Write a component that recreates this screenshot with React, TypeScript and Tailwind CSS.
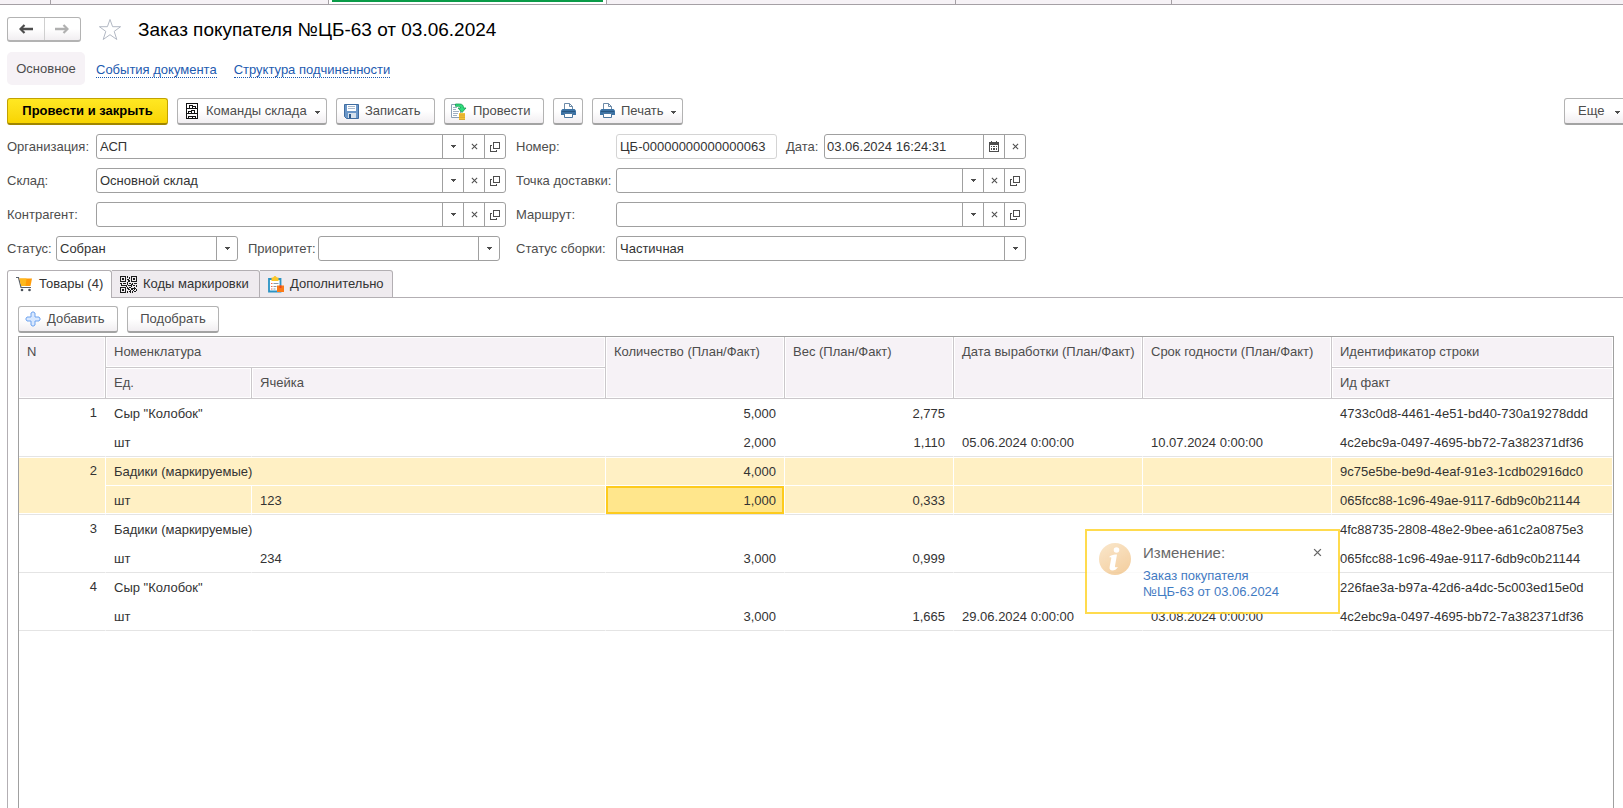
import React from 'react';

interface IconProps {
    className?: string;
}

const CaretIcon: React.FC<IconProps> = ({ className }) => (
    <svg viewBox="0 0 5 3" width="5" height="3" fill="currentColor" shapeRendering="crispEdges" className={className} aria-hidden="true">
        <path d="M0 0h5v1H4v1H3v1H2V2H1V1H0Z" />
    </svg>
);

const CrossIcon: React.FC<{ size: number }> = ({ size }) => (
    <svg viewBox="0 0 8 8" width={size} height={size} fill="none" stroke="currentColor" strokeWidth="1.2" aria-hidden="true">
        <path d="M1 1l6 6M7 1L1 7" />
    </svg>
);

const OpenIcon: React.FC = () => (
    <svg viewBox="0 0 10 10" width="10" height="10" fill="none" stroke="currentColor" shapeRendering="crispEdges" aria-hidden="true">
        <path d="M3.5.5h6v6h-6ZM2 3.500H.5v6h6V8" />
    </svg>
);

const CalendarIcon: React.FC = () => (
    <svg viewBox="0 0 10 11" width="10" height="11" fill="currentColor" shapeRendering="crispEdges" aria-hidden="true">
        <path d="M2 0h1v1h4V0h1v1h2v10H0V1h2ZM1 4v6h8V4Z" fillRule="evenodd" />
        <path d="M2 5h1v1H2ZM4 5h2v1H4ZM7 5h1v1H7ZM2 7h1v1H2ZM4 7h2v1H4ZM7 7h1v1H7ZM2 9h1V8H2ZM4 9h2V8H4ZM7 9h1V8H7Z" />
    </svg>
);

const ArrowIcon: React.FC<IconProps> = ({ className }) => (
    <svg viewBox="0 0 14 10" width="14" height="10" fill="none" stroke="currentColor" className={className} aria-hidden="true">
        <path d="M2 5h12" strokeWidth="2.500" />
        <path d="M5.500 1L1.500 5l4 4" strokeWidth="2.200" />
    </svg>
);

const StarIcon: React.FC = () => (
    <svg viewBox="0 0 24 23" width="24" height="23" fill="#fff" stroke="#b3b9c4" aria-hidden="true">
        <path d="M12 1.500l2.600 7.200h8l-6.400 4.700 2.600 8.100L12 16.700l-6.800 4.800 2.600-8.100L1.400 8.700h8Z" />
    </svg>
);

const RackIcon: React.FC = () => (
    <svg viewBox="0 0 12 16" width="12" height="16" fill="none" stroke="#111" shapeRendering="crispEdges" aria-hidden="true">
        <path d="M.5 0v16M11.500 0v16M0 .5h12M0 5.500h12M0 10.500h12M0 15.500h12" />
        <path d="M3.500 5V2.500h3V5M6.500 3.500h3V5M2.500 10V8.500h3V10M5.500 10V7.500h3V10M2.500 15v-2h4v2M6.500 13.500h3V15" />
    </svg>
);

const SaveIcon: React.FC = () => (
    <svg viewBox="0 0 15 15" width="15" height="15" aria-hidden="true">
        <path d="M.5.5h14v14h-12l-2-2Z" fill="#6a96c8" stroke="#3f6ca0" />
        <path d="M3 1h9v6H3Z" fill="#fff" />
        <path d="M4 2.500h7M4 4.500h7" stroke="#a6b8cc" />
        <path d="M4 9h8v5H4Z" fill="#d5e0ec" />
        <path d="M5 10h2v4H5Z" fill="#2f5b8d" />
    </svg>
);

const PostIcon: React.FC = () => (
    <svg viewBox="0 0 16 17" width="16" height="17" aria-hidden="true">
        <path d="M.5 1.500h9v13h-9Z" fill="#fff" stroke="#8ba0b5" />
        <path d="M2 4.500h4M2 6.500h3M2 8.500h6M2 10.500h5M2 12.500h4" stroke="#9fb0c2" />
        <path d="M4.500 1h4c3 0 4 1.500 4 4h2.500L11 9.500 7 5h2.500c0-1.200-.6-1.700-2-1.700h-3Z" fill="#2fdc7c" stroke="#179a50" strokeWidth=".8" />
        <path d="M8 10h6v6.500H8Z" fill="#f5c53c" />
        <path d="M8 12h6M8 14.200h6M8 16.500h6" stroke="#cf9a20" strokeWidth=".8" />
    </svg>
);

const PrinterIcon: React.FC = () => (
    <svg viewBox="0 0 15 16" width="15" height="16" aria-hidden="true">
        <path d="M3.500 6.500v-6h5l3 3v3" fill="#fff" stroke="#6d8ba8" />
        <path d="M8.500.5v3h3" fill="none" stroke="#6d8ba8" />
        <path d="M1.500 6h12L15 7.500V12H0V7.500Z" fill="#3c73a5" />
        <path d="M1 8.500h13" stroke="#275680" />
        <path d="M3.500 10.500h8v4h-8Z" fill="#fff" stroke="#4c779f" />
    </svg>
);

const CartIcon: React.FC = () => (
    <svg viewBox="0 0 17 16" width="17" height="16" aria-hidden="true">
        <path d="M0 1.500h2.500L5 11.500h10" fill="none" stroke="#5a6068" strokeWidth="1.200" />
        <path d="M3.500 2.500H16L14.500 10H5.300Z" fill="#ff9c08" />
        <path d="M3.500 2.500h7l-1 7.500H5.300Z" fill="#ffb91d" />
        <circle cx="6" cy="14" r="1.300" fill="#4a5058" />
        <circle cx="13.500" cy="14" r="1.300" fill="#4a5058" />
    </svg>
);

const QrIcon: React.FC = () => (
    <svg viewBox="0 0 17 17" width="17" height="17" fill="#1c1c1c" shapeRendering="crispEdges" aria-hidden="true">
        <path fillRule="evenodd" d="M0 0h6v6H0ZM1 1v4h4V1ZM11 0h6v6h-6ZM12 1v4h4V1ZM0 11h6v6H0ZM1 12v4h4v-4Z" />
        <path d="M2 2h2v2H2ZM13 2h2v2h-2ZM2 13h2v2H2Z" />
        <path d="M7 0h1v2H7ZM9 1h1v2H9ZM7 3h2v1H7ZM8 4h2v2H8ZM0 7h2v1H0ZM3 7h3v1H3ZM7 6h1v3H7ZM9 7h2v1H9ZM12 7h1v2h-1ZM14 7h3v1h-3ZM1 8h1v2H1ZM4 9h2v1H4ZM8 9h3v1H8ZM13 9h2v1h-2ZM16 9h1v2h-1ZM7 11h1v2H7ZM9 11h2v1H9ZM11 12h2v2h-2ZM14 11h1v3h-1ZM8 13h2v1H8ZM7 15h1v2H7ZM9 15h2v1H9ZM12 15h1v2h-1ZM14 15h2v1h-2ZM16 13h1v2h-1ZM10 16h1v1h-1ZM2 9h2v1H2ZM6 9h1v2H6ZM11 8h1v3h-1ZM8 12h1v1H8ZM13 12h1v1h-1ZM15 12h1v1h-1ZM10 14h1v1h-1ZM13 14h1v1h-1Z" />
    </svg>
);

const ClipboardIcon: React.FC = () => (
    <svg viewBox="0 0 16 17" width="16" height="17" aria-hidden="true">
        <path d="M1 3h11.500v12.500H1Z" fill="#fff" stroke="#2b93c4" strokeWidth="1.800" />
        <path d="M3.500 1.500H5L6.500 0h1L9 1.500h1.500V5h-7Z" fill="#fcc728" />
        <path d="M3 7.500h1.500M3 10.500h1.500M3 13h1.500" stroke="#ef6a4b" />
        <path d="M5.500 7.500h5M5.500 10.500h3M5.500 13h2" stroke="#8b9aa6" />
        <path d="M9 9.500h7V16H9Z" fill="#fb7a17" />
        <path d="M11.500 9.500h2V12h-2Z" fill="#e2442a" />
    </svg>
);

const PlusIcon: React.FC = () => (
    <svg viewBox="0 0 16 16" width="16" height="16" fill="#d8e8ff" stroke="#6ea3ee" aria-hidden="true">
        <path d="M6 2q2-2.500 4 0v4h4q2.500 2 0 4h-4v4q-2 2.500-4 0v-4H2q-2.500-2 0-4h4Z" />
    </svg>
);

const InfoIcon: React.FC = () => (
    <svg viewBox="0 0 32 32" width="32" height="32" className="shrink-0" aria-hidden="true">
        <defs>
            <linearGradient id="info-fill" x1="0" y1="0" x2="0.600" y2="1">
                <stop offset="0" stopColor="#f9e3c3" />
                <stop offset="1" stopColor="#f3c993" />
            </linearGradient>
        </defs>
        <circle cx="16" cy="16" r="16" fill="url(#info-fill)" />
        <circle cx="17.500" cy="7" r="2.800" fill="#fff" />
        <path d="M10.500 13.500c2-1.500 4.500-2 7.500-2l-2 11.500c-.2 1.300.8 1.500 3 1-1.500 2.500-3.500 3.500-5.500 3.500-2.300 0-3.300-1.300-2.900-3.500l1.700-9c.1-.8-.6-1-1.800-.5Z" fill="#fff" />
    </svg>
);

interface ToolButtonProps {
    icon?: React.ReactNode;
    label?: string;
    title?: string;
    menu?: boolean;
    className?: string;
}

const ToolButton: React.FC<ToolButtonProps> = ({ icon, label, title, menu, className = '' }) => (
    <button
        type="button"
        title={title}
        className={`flex h-[27px] shrink-0 items-center rounded-[3px] border border-b-2 border-[#b3b3b3] border-b-[#a3a3a3] bg-linear-to-b from-white from-50% to-[#f1eef1] whitespace-nowrap text-[#4d4d4d] ${className}`}
    >
        {icon && <span className="flex w-4 shrink-0 justify-center">{icon}</span>}
        {label && <span className={icon ? 'ml-[6px]' : ''}>{label}</span>}
        {menu && <CaretIcon className="mt-[2px] mr-[6px] ml-auto" />}
    </button>
);

const FieldButton: React.FC<{ title: string; children: React.ReactNode }> = ({ title, children }) => (
    <button type="button" title={title} className="flex w-[21px] shrink-0 items-center justify-center border-l border-[#a0a0a0] text-[#4d4d4d]">
        {children}
    </button>
);

const boxClass = 'flex h-[25px] min-w-0 rounded-[3px] border border-[#a0a0a0] bg-white';

const RefField: React.FC<{ id: string; label: string; value?: string; labelClass: string }> = ({ id, label, value = '', labelClass }) => (
    <div className="flex items-center">
        <label htmlFor={id} className={`shrink-0 whitespace-nowrap ${labelClass}`}>{label}</label>
        <div className={`flex-1 ${boxClass}`}>
            <input id={id} defaultValue={value} className="min-w-0 flex-1 px-[3px] text-[#333] outline-none" />
            <FieldButton title="Выбрать из списка"><CaretIcon /></FieldButton>
            <FieldButton title="Очистить"><CrossIcon size={7} /></FieldButton>
            <FieldButton title="Открыть"><OpenIcon /></FieldButton>
        </div>
    </div>
);

const SelectField: React.FC<{ id: string; label: string; value?: string; labelClass: string; boxWidth: string }> = ({ id, label, value = '', labelClass, boxWidth }) => (
    <div className="flex items-center">
        <label htmlFor={id} className={`shrink-0 whitespace-nowrap ${labelClass}`}>{label}</label>
        <div className={`relative ${boxWidth} ${boxClass}`}>
            <select id={id} defaultValue={value} className="w-full appearance-none bg-transparent pr-6 pl-[3px] text-[#333] outline-none">
                <option value={value}>{value}</option>
            </select>
            <span className="pointer-events-none absolute inset-y-0 right-0 flex w-[21px] items-center justify-center border-l border-[#a0a0a0] text-[#4d4d4d]">
                <CaretIcon />
            </span>
        </div>
    </div>
);

interface OrderRow {
    n: number;
    name: string;
    unit: string;
    cell: string;
    qty: [string, string];
    weight: [string, string];
    made: string;
    expires: string;
    ids: [string, string];
}

const rows: OrderRow[] = [
    { n: 1, name: 'Сыр "Колобок"', unit: 'шт', cell: '', qty: ['5,000', '2,000'], weight: ['2,775', '1,110'], made: '05.06.2024 0:00:00', expires: '10.07.2024 0:00:00', ids: ['4733c0d8-4461-4e51-bd40-730a19278ddd', '4c2ebc9a-0497-4695-bb72-7a382371df36'] },
    { n: 2, name: 'Бадики (маркируемые)', unit: 'шт', cell: '123', qty: ['4,000', '1,000'], weight: ['', '0,333'], made: '', expires: '', ids: ['9c75e5be-be9d-4eaf-91e3-1cdb02916dc0', '065fcc88-1c96-49ae-9117-6db9c0b21144'] },
    { n: 3, name: 'Бадики (маркируемые)', unit: 'шт', cell: '234', qty: ['', '3,000'], weight: ['', '0,999'], made: '', expires: '', ids: ['4fc88735-2808-48e2-9bee-a61c2a0875e3', '065fcc88-1c96-49ae-9117-6db9c0b21144'] },
    { n: 4, name: 'Сыр "Колобок"', unit: 'шт', cell: '', qty: ['', '3,000'], weight: ['', '1,665'], made: '29.06.2024 0:00:00', expires: '03.08.2024 0:00:00', ids: ['226fae3a-b97a-42d6-a4dc-5c003ed15e0d', '4c2ebc9a-0497-4695-bb72-7a382371df36'] },
];

const SELECTED = 2;

const thClass = 'h-[31px] border-r border-b border-[#cbc8cb] bg-[#f6f2f6] px-2 pt-[7px] text-left align-top font-normal whitespace-nowrap text-[#4d4d4d] shadow-[inset_0_0_0_1px_#fff] last:border-r-0';

const OrderLine: React.FC<{ row: OrderRow }> = ({ row }) => {
    const on = row.n === SELECTED;
    const base = 'h-[29px] border-r pr-2 pl-2 whitespace-nowrap';
    const top = `${base} ${on ? 'border-y border-white bg-[#fff0c4]' : 'border-transparent'}`;
    const bottomLine = `${base} border-b border-b-[#e4e4e4]`;
    const bottom = `${bottomLine} pt-[2px] ${on ? 'border-r-white bg-[#fff0c4] shadow-[inset_0_-1px_#fff]' : 'border-r-transparent'}`;

    return (
        <>
            <tr>
                <td rowSpan={2} className={`${bottomLine} pt-[6px] text-right align-top ${on ? 'border-r-white bg-[#fff0c4] shadow-[inset_0_1px_#fff,inset_0_-1px_#fff]' : 'border-r-transparent'}`}>{row.n}</td>
                <td colSpan={2} className={top}>{row.name}</td>
                <td className={`${top} text-right`}>{row.qty[0]}</td>
                <td className={`${top} text-right`}>{row.weight[0]}</td>
                <td className={top}></td>
                <td className={top}></td>
                <td className={top}>{row.ids[0]}</td>
            </tr>
            <tr>
                <td className={bottom}>{row.unit}</td>
                <td className={bottom}>{row.cell}</td>
                {on ? (
                    <td className={`${bottomLine} border-r-white bg-[#ffe68c] pt-[2px] text-right shadow-[inset_0_0_0_2px_#fdcb1e]`}>{row.qty[1]}</td>
                ) : (
                    <td className={`${bottom} text-right`}>{row.qty[1]}</td>
                )}
                <td className={`${bottom} text-right`}>{row.weight[1]}</td>
                <td className={bottom}>{row.made}</td>
                <td className={bottom}>{row.expires}</td>
                <td className={bottom}>{row.ids[1]}</td>
            </tr>
        </>
    );
};

const App: React.FC = () => {
    return (
        <div className="relative flex h-screen flex-col overflow-hidden bg-white font-['Liberation_Sans',Arial,sans-serif] text-[13px] leading-4 text-[#4d4d4d]">
            <div className="flex h-[5px] shrink-0 border-b border-[#a5a0a5] bg-[#f6f2f6]">
                <div className="w-[51px] border-r border-[#a5a0a5]" />
                <div className="w-[278px] border-r border-[#a5a0a5]" />
                <div className="w-[278px] border-r border-[#a5a0a5] bg-white px-[3px]">
                    <div className="h-[2px] bg-[#0a9b48]" />
                </div>
                <div className="w-[349px] border-r border-[#a5a0a5]" />
                <div className="w-[216px] border-r border-[#a5a0a5]" />
            </div>

            <header className="mt-3 flex h-[25px] shrink-0 items-center pl-[7px]">
                <div className="flex h-[25px] w-[74px] rounded-[3px] border border-b-2 border-[#b3b3b3] bg-linear-to-b from-white from-50% to-[#f1eef1]">
                    <button type="button" title="Назад" className="flex flex-1 items-center justify-center border-r border-[#cfcfcf] text-[#4d4d4d]"><ArrowIcon /></button>
                    <button type="button" title="Вперед" className="flex flex-1 items-center justify-center text-[#b0b0b0]"><ArrowIcon className="rotate-180" /></button>
                </div>
                <button type="button" title="Добавить в избранное" className="ml-[17px]"><StarIcon /></button>
                <h1 className="ml-4 pt-px text-[19px] leading-6 text-black">Заказ покупателя №ЦБ-63 от 03.06.2024</h1>
            </header>

            <nav className="mt-[10px] flex h-[33px] shrink-0 items-center pl-[7px]">
                <span className="flex h-[33px] w-[78px] items-center justify-center rounded-[5px] bg-[#f6f2f6] pt-px text-[#4d4d4d]">Основное</span>
                <a href="#events" className="mt-[3px] ml-[11px] border-b border-dotted border-[#1c5ab0] leading-[14px] text-[#1c5ab0]">События документа</a>
                <a href="#structure" className="mt-[3px] ml-[17px] border-b border-dotted border-[#1c5ab0] leading-[14px] text-[#1c5ab0]">Структура подчиненности</a>
            </nav>

            <div className="mt-[13px] flex shrink-0 items-center gap-[9px] pl-[7px]">
                <button type="button" className="h-[27px] w-[161px] rounded-[3px] border border-b-2 border-[#c2a200] border-b-[#a08600] bg-linear-to-b from-[#ffe822] to-[#f8d400] font-bold whitespace-nowrap text-black">Провести и закрыть</button>
                <ToolButton icon={<RackIcon />} label="Команды склада" menu className="w-[150px] pl-[6px]" />
                <ToolButton icon={<SaveIcon />} label="Записать" className="w-[99px] pl-[6px]" />
                <ToolButton icon={<PostIcon />} label="Провести" className="w-[100px] pl-[6px]" />
                <ToolButton icon={<PrinterIcon />} title="Печать документа" className="w-[30px] justify-center" />
                <ToolButton icon={<PrinterIcon />} label="Печать" menu className="w-[91px] pl-[6px]" />
                <ToolButton label="Еще" menu className="-mr-1 ml-auto w-[63px] pl-[13px]" />
            </div>

            <div className="mt-[9px] grid shrink-0 grid-cols-[499px_510px] gap-x-[10px] gap-y-[9px] pl-[7px]">
                <RefField id="org" label="Организация:" value="АСП" labelClass="w-[89px]" />
                <div className="flex items-center">
                    <label htmlFor="number" className="w-[100px] shrink-0">Номер:</label>
                    <input id="number" readOnly defaultValue="ЦБ-00000000000000063" className="h-[25px] w-[161px] rounded-[3px] border border-[#d4d4d4] px-[3px] text-[#333] outline-none" />
                    <label htmlFor="date" className="w-[47px] shrink-0 pl-[9px]">Дата:</label>
                    <div className={`flex-1 ${boxClass}`}>
                        <input id="date" defaultValue="03.06.2024 16:24:31" className="min-w-0 flex-1 px-[2px] text-[#333] outline-none" />
                        <FieldButton title="Календарь"><CalendarIcon /></FieldButton>
                        <FieldButton title="Очистить"><CrossIcon size={7} /></FieldButton>
                    </div>
                </div>
                <RefField id="store" label="Склад:" value="Основной склад" labelClass="w-[89px]" />
                <RefField id="point" label="Точка доставки:" labelClass="w-[100px]" />
                <RefField id="partner" label="Контрагент:" labelClass="w-[89px]" />
                <RefField id="route" label="Маршрут:" labelClass="w-[100px]" />
                <div className="flex items-center gap-[10px]">
                    <SelectField id="status" label="Статус:" value="Собран" labelClass="w-[49px]" boxWidth="w-[182px]" />
                    <SelectField id="priority" label="Приоритет:" labelClass="w-[70px]" boxWidth="w-[182px]" />
                </div>
                <SelectField id="pick" label="Статус сборки:" value="Частичная" labelClass="w-[100px]" boxWidth="flex-1" />
            </div>

            <div className="mt-[9px] flex h-[28px] shrink-0 pl-[7px] text-[#333]" role="tablist">
                <button type="button" role="tab" aria-selected="true" className="flex w-[105px] items-center rounded-t-[3px] border border-b-0 border-[#b3afb3] bg-white pb-px pl-2">
                    <CartIcon /><span className="ml-[6px]">Товары (4)</span>
                </button>
                <button type="button" role="tab" aria-selected="false" className="flex w-[148px] items-center rounded-tr-[3px] border border-l-0 border-[#b3afb3] bg-[#efebef] pl-2">
                    <QrIcon /><span className="ml-[6px]">Коды маркировки</span>
                </button>
                <button type="button" role="tab" aria-selected="false" className="flex w-[133px] items-center rounded-tr-[3px] border border-l-0 border-[#b3afb3] bg-[#efebef] pl-2">
                    <ClipboardIcon /><span className="ml-[6px]">Дополнительно</span>
                </button>
                <div className="flex-1 border-b border-[#b3afb3]" />
            </div>

            <div className="ml-[7px] flex min-h-0 flex-1 flex-col border-l border-[#b3afb3] pt-2 pr-[9px] pl-[10px]">
                <div className="flex gap-[9px]">
                    <ToolButton icon={<PlusIcon />} label="Добавить" className="w-[100px] pl-[6px]" />
                    <ToolButton label="Подобрать" className="w-[92px] justify-center" />
                </div>
                <div className="mt-[3px] flex-1 border border-b-0 border-[#a0a0a0]">
                    <table className="w-full table-fixed border-separate border-spacing-0 text-[#333]">
                        <colgroup>
                            <col className="w-[87px]" />
                            <col className="w-[146px]" />
                            <col className="w-[354px]" />
                            <col className="w-[179px]" />
                            <col className="w-[169px]" />
                            <col className="w-[189px]" />
                            <col className="w-[189px]" />
                            <col />
                        </colgroup>
                        <thead>
                            <tr>
                                <th rowSpan={2} className={thClass}>N</th>
                                <th colSpan={2} className={thClass}>Номенклатура</th>
                                <th rowSpan={2} className={thClass}>Количество (План/Факт)</th>
                                <th rowSpan={2} className={thClass}>Вес (План/Факт)</th>
                                <th rowSpan={2} className={thClass}>Дата выработки (План/Факт)</th>
                                <th rowSpan={2} className={thClass}>Срок годности (План/Факт)</th>
                                <th className={thClass}>Идентификатор строки</th>
                            </tr>
                            <tr>
                                <th className={thClass}>Ед.</th>
                                <th className={thClass}>Ячейка</th>
                                <th className={thClass}>Ид факт</th>
                            </tr>
                        </thead>
                        <tbody>
                            {rows.map((row) => <OrderLine key={row.n} row={row} />)}
                        </tbody>
                    </table>
                </div>
            </div>

            <div role="status" className="absolute top-[529px] right-[283px] flex h-[85px] w-[255px] border-2 border-[#ffd530] bg-white pt-3 pr-4 pl-3 opacity-85">
                <InfoIcon />
                <div className="ml-3 flex-1">
                    <p className="text-[15px] leading-5 text-[#4d4d4d]">Изменение:</p>
                    <a href="#order" className="mt-[5px] block leading-4 text-[#1c64b8]">Заказ покупателя<br />№ЦБ-63 от 03.06.2024</a>
                </div>
                <button type="button" title="Закрыть" className="mt-[5px] h-2 text-[#4d4d4d]"><CrossIcon size={9} /></button>
            </div>
        </div>
    );
};

export default App;
